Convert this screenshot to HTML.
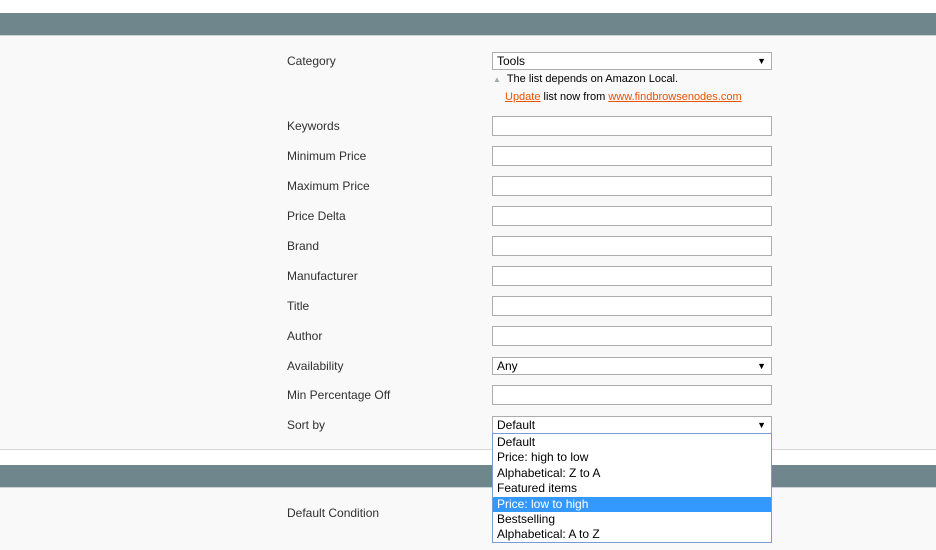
<!DOCTYPE html>
<html><head><style>
body{margin:0;width:936px;height:550px;background:#f9f9f9;font-family:"Liberation Sans",Arial,sans-serif;font-size:12px;color:#333;position:relative;overflow:hidden}
.a{position:absolute}
.bar{left:0;width:936px;height:22px;background:#6f878c}
.lbl{left:287px;color:#303030}
.in{left:492px;width:278px;height:18px;border:1px solid #adadad;background:#fff}
.sel{font-size:12px;color:#000;line-height:17px;padding-left:4px;box-sizing:border-box;width:280px;height:18px}
.sel:after{content:"▼";position:absolute;right:5px;top:0;font-size:9px}
.dd{left:492px;top:433px;width:280px;height:110px;border:1px solid #7a9ad6;background:#fff;box-sizing:border-box;padding-top:1px}
.dd div{height:15.4px;line-height:15px;padding-left:4px;color:#000;font-size:12px}
.dd .h{background:#3399ff;color:#fff}
a{color:#eb5202;text-decoration:underline}
</style></head><body>
<div class="a" style="left:0;top:0;width:936px;height:13px;background:#fff"></div>
<div class="a bar" style="top:13px"></div>
<div class="a" style="left:0;top:35px;width:936px;height:1px;background:#c9d3d5"></div>

<div class="a lbl" style="top:54px">Category</div>
<div class="a in sel" style="top:52px">Tools</div>
<div class="a" style="left:493px;top:73px;font-size:11px;color:#000"><span style="color:#a0a8b0;font-size:8px">▲</span>&nbsp; The list depends on Amazon Local.</div>
<div class="a" style="left:505px;top:91px;font-size:11px;color:#000"><a>Update</a> list now from <a>www.findbrowsenodes.com</a></div>

<div class="a lbl" style="top:119px">Keywords</div><div class="a in" style="top:116px"></div>
<div class="a lbl" style="top:149px">Minimum Price</div><div class="a in" style="top:146px"></div>
<div class="a lbl" style="top:179px">Maximum Price</div><div class="a in" style="top:176px"></div>
<div class="a lbl" style="top:209px">Price Delta</div><div class="a in" style="top:206px"></div>
<div class="a lbl" style="top:239px">Brand</div><div class="a in" style="top:236px"></div>
<div class="a lbl" style="top:269px">Manufacturer</div><div class="a in" style="top:266px"></div>
<div class="a lbl" style="top:299px">Title</div><div class="a in" style="top:296px"></div>
<div class="a lbl" style="top:329px">Author</div><div class="a in" style="top:326px"></div>
<div class="a lbl" style="top:359px">Availability</div><div class="a in sel" style="top:357px">Any</div>
<div class="a lbl" style="top:388px">Min Percentage Off</div><div class="a in" style="top:385px"></div>
<div class="a lbl" style="top:418px">Sort by</div><div class="a in sel" style="top:416px">Default</div>

<div class="a" style="left:0;top:449px;width:936px;height:1px;background:#d6d6d6"></div>
<div class="a" style="left:0;top:450px;width:936px;height:15px;background:#fff"></div>
<div class="a bar" style="top:465px"></div>
<div class="a" style="left:0;top:487px;width:936px;height:1px;background:#c9d3d5"></div>
<div class="a lbl" style="top:506px">Default Condition</div>

<div class="a dd">
<div>Default</div><div>Price: high to low</div><div>Alphabetical: Z to A</div><div>Featured items</div><div class="h">Price: low to high</div><div>Bestselling</div><div>Alphabetical: A to Z</div>
</div>
</body></html>
